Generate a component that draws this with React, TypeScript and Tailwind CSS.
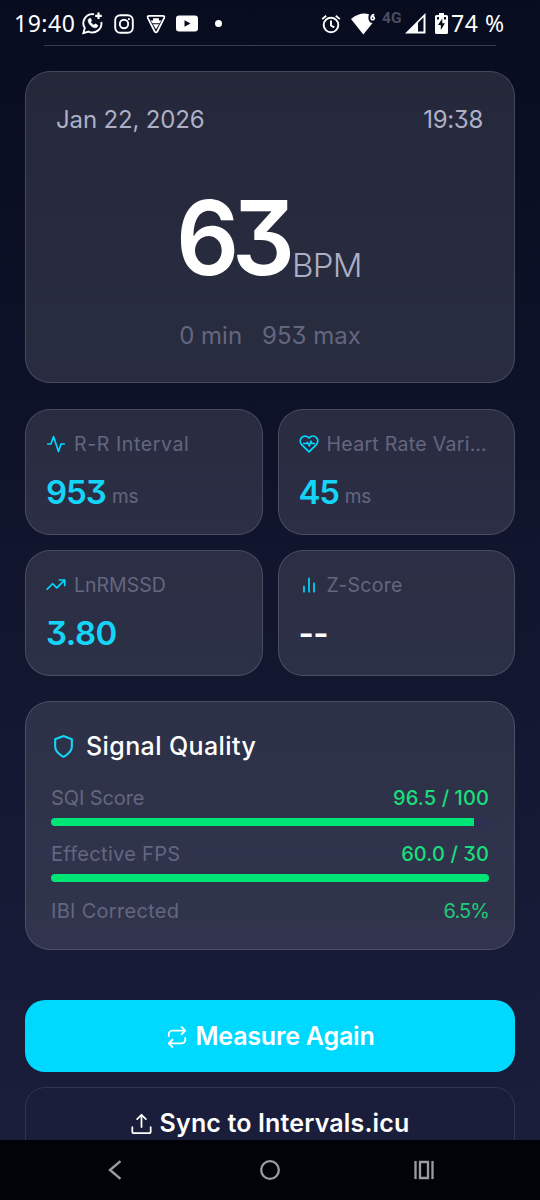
import React from "react";

const inter = "font-['Inter',sans-serif]";

function StatusBar() {
  return (
    <header className="flex h-[44px] shrink-0 items-center pl-[14px] pr-[35px] pt-[3px] font-['Noto_Sans',sans-serif] text-white">
      <span className="w-[67px] whitespace-nowrap text-[23px] leading-none tracking-[0.5px]">19:40</span>
      <svg className="h-6 w-6 shrink-0" viewBox="0 0 24 24" fill="none" stroke="currentColor" strokeWidth="1.9">
        <path d="M13 2.3A9 9 0 0 0 3.8 16L2.4 21.1 7.6 19.6A9 9 0 0 0 20.3 10" />
        <path d="M17.5 0.5v6.6M14.2 3.8h6.6" strokeWidth="2.2" />
        <path d="M8.2 6.4c-1.8 1-1.2 3.6.4 5.8s4.2 4.2 6.4 3.5c1.7-.5 2.2-2 1.5-2.7l-2.2-1.2-1.4 1.3c-1.4-.6-2.5-1.7-3.2-3.1l1-1.3-.9-2.3z" fill="currentColor" strokeWidth="0.5" />
      </svg>
      <svg className="ml-[9px] h-[20px] w-[20px] shrink-0" viewBox="0 0 20 20" fill="none" stroke="currentColor" strokeWidth="1.9">
        <rect x="1.2" y="1.2" width="17.6" height="17.6" rx="5" />
        <circle cx="10" cy="10" r="4.2" />
        <circle cx="14.9" cy="5.1" r="1.1" fill="currentColor" stroke="none" />
      </svg>
      <svg className="ml-[12px] h-[20px] w-[20px] shrink-0" viewBox="0 0 20 20" fill="none" stroke="currentColor" strokeLinejoin="round">
        <path d="M3.2 1.8h13.6q2.2.2 1.3 2.3L11.3 17.5q-1.3 1.7-2.6 0L1.9 4.1Q1 2 3.2 1.8z" strokeWidth="1.8" />
        <path d="M7 4.3h6v2.2h2.3l-1.7 2.7H6.4L4.7 6.5H7z" fill="currentColor" stroke="none" />
        <path d="M6.9 10.2h6.2L10 15.2z" fill="currentColor" stroke="none" />
      </svg>
      <svg className="ml-[10px] h-[17px] w-[22px] shrink-0" viewBox="0 0 22 17">
        <rect x="0" y="0.5" width="22" height="16" rx="3" fill="white" />
        <path d="M8.5 5.2v6.6l6-3.3z" fill="#080c1f" />
      </svg>
      <span className="ml-[17px] h-[7px] w-[7px] rounded-full bg-white" />
      <svg className="ml-auto h-[20px] w-[20px] shrink-0" viewBox="0 0 20 20" fill="none" stroke="currentColor" strokeWidth="1.9">
        <circle cx="10" cy="11" r="7.3" />
        <path d="M10 6.5v5l3.3 1.9M1.2 5.1l4-3.4M18.8 5.1l-4-3.4" />
      </svg>
      <svg className="ml-[10px] h-[22px] w-[26px] shrink-0" viewBox="0 0 26 22">
        <path d="M0 6Q9-1.5 18 1.2q-1.5 4.5.6 7.5 1.5 1.3 3 1.2L12.3 21.500z" fill="white" />
        <path d="M23.3 1.7q-3 .2-3.2 3.5a1.6 1.6 0 1 0 .5-1.2" fill="none" stroke="white" strokeWidth="1.7" />
      </svg>
      <span className="-mt-[10px] ml-[5px] w-[20px] whitespace-nowrap font-['Roboto',sans-serif] text-[15.5px] font-bold leading-none text-[#4b4e5e]">4G</span>
      <svg className="ml-[3px] h-[21px] w-[21px] shrink-0" viewBox="0 0 21 21">
        <path d="M0 20.5 20.5 0v20.500z" fill="white" />
        <path d="M13 9.8 18.5 4.3v14.2H13z" fill="#080c1f" />
      </svg>
      <svg className="ml-[9px] h-[22px] w-[13px] shrink-0" viewBox="0 0 13 22">
        <path d="M4 0h5v2h2.500Q13 2 13 3.500v16Q13 21 11.500 21h-10Q0 21 0 19.500v-16Q0 2 1.500 2H4z" fill="white" />
        <path d="M7.3 5.5 3 12h2.800v5L10 10.300H7.300zM2 4h2v2.500H2zM9 4h2v2.500H9z" fill="#080c1f" />
      </svg>
      <span className="ml-[3px] w-[54px] whitespace-nowrap text-[23px] leading-none tracking-[0.6px]">74 %</span>
    </header>
  );
}

function MetricCard(props: { icon: React.ReactNode; label: React.ReactNode; children: React.ReactNode }) {
  return (
    <div className="h-[126px] min-w-0 rounded-[25px] border border-white/15 bg-white/[0.115] pl-[20px] pr-[10px] pt-[24px]">
      <div className="flex h-5 items-center gap-2 text-[#00d9ff]">
        {props.icon}
        <span className="whitespace-nowrap text-[19.5px] leading-5 text-[#64667f]">{props.label}</span>
      </div>
      <div className="mt-[20px] flex h-9 items-baseline whitespace-nowrap text-[33px] font-semibold leading-9 text-[#14d5f8]">
        {props.children}
      </div>
    </div>
  );
}

function Unit() {
  return <span className="relative -top-px ml-[6px] text-[19px] font-normal tracking-[0px] text-[#64667f]">ms</span>;
}

function Bar({ percent }: { percent: number }) {
  return (
    <div className="h-2 overflow-hidden rounded-full bg-[#2d3050]">
      <div className="h-full bg-[#00e676]" style={{ width: `${percent}%` }} />
    </div>
  );
}

const stroke = {
  viewBox: "0 0 24 24",
  fill: "none",
  stroke: "currentColor",
  strokeWidth: 2,
  strokeLinecap: "round" as const,
  strokeLinejoin: "round" as const,
};

export default function App() {
  return (
    <div
      className={`${inter} flex h-[1200px] w-[540px] flex-col overflow-hidden bg-linear-to-b from-[#080c1f] to-[#1b1f3d] [font-feature-settings:'cv09']`}
    >
      <StatusBar />
      <div className="mx-[44px] mt-[1px] h-px shrink-0 bg-[#393c4a]" />

      <main className="flex min-h-0 flex-1 flex-col overflow-hidden px-[25px] pt-[25px]">
        <section className="flex h-[312px] shrink-0 flex-col items-center rounded-[25px] border border-white/15 bg-white/[0.115] px-[31px] pt-[36px]">
          <div className="flex w-full justify-between text-[24px] leading-6 text-[#adafc6]">
            <span className="-ml-px tracking-[-0.15px]">Jan 22, 2026</span>
            <span className="tracking-[-0.3px]">19:38</span>
          </div>
          <div className="mt-[56px] flex h-[100px] w-[184px] items-baseline leading-[100px] text-white">
            <span className="-ml-[2px] w-[116px] shrink-0 origin-left scale-x-[0.96] text-[103px] font-semibold tracking-[-7.5px]">63</span>
            <span className="relative top-[2px] text-[33px] font-light tracking-[-0.7px] text-[#adafc6]">BPM</span>
          </div>
          <div className="mt-[36px] flex gap-5 whitespace-nowrap text-[24px] leading-6 text-[#64667f]">
            <span>0 min</span>
            <span>953 max</span>
          </div>
        </section>

        <section className="mt-[26px] grid shrink-0 grid-cols-2 gap-x-[15px] gap-y-[15px]">
          <MetricCard
            icon={
              <svg className="h-5 w-5 shrink-0" {...stroke}>
                <path d="M22 12h-4l-3 9L9 3l-3 9H2" />
              </svg>
            }
            label={<span className="tracking-[0.6px]">R-R Interval</span>}
          >
            <span className="tracking-[-1px]">953</span>
            <Unit />
          </MetricCard>
          <MetricCard
            icon={
              <svg className="h-5 w-5 shrink-0" {...stroke}>
                <path d="M12 21.5 3.2 12.7A5.9 5.9 0 0 1 11.5 4.3l.5.5.5-.5a5.9 5.9 0 0 1 8.3 8.400z" />
                <path d="M5.5 11.5h3.5l1.2-1.5 2.3 4.5 1.7-6 1.3 3h3" strokeWidth="1.8" />
              </svg>
            }
            label={<span className="tracking-[0.3px]">Heart Rate Vari…</span>}
          >
            <span className="tracking-[-1.3px]">45</span>
            <Unit />
          </MetricCard>
          <MetricCard
            icon={
              <svg className="h-5 w-5 shrink-0" {...stroke}>
                <path d="M1.5 17 8 10.5l5 5L22 6.5" />
                <path d="M16 6h6.5v6.5" />
              </svg>
            }
            label={<span className="tracking-[0px]">LnRMSSD</span>}
          >
            <span className="tracking-[-0.5px]">3.80</span>
          </MetricCard>
          <MetricCard
            icon={
              <svg className="h-5 w-5 shrink-0" {...stroke}>
                <path d="M18 20V10M12 20V4M6 20v-6" />
              </svg>
            }
            label={<span className="tracking-[0.3px]">Z-Score</span>}
          >
            <span className="tracking-[-0.5px] text-white">--</span>
          </MetricCard>
        </section>

        <section className="mt-[25px] flex h-[249px] shrink-0 flex-col rounded-[25px] border border-white/15 bg-white/[0.115] px-[25px] pt-[32px] text-[20px] leading-5 text-[#64667f]">
          <div className="flex h-[25px] items-center gap-[10px]">
            <svg className="h-[25px] w-[25px] text-[#14d5f8]" {...stroke}>
              <path d="M12 22s8-4 8-10V5l-8-3-8 3v7c0 6 8 10 8 10z" />
            </svg>
            <h2 className="whitespace-nowrap text-[25px] font-medium leading-[25px] tracking-[0.4px] text-white">Signal Quality</h2>
          </div>
          <div className="mt-[29px] flex justify-between">
            <span className="tracking-[-0.1px]">SQI Score</span>
            <span className="font-medium tracking-[0.1px] text-[#18df7c]">96.5 / 100</span>
          </div>
          <div className="mt-[10px]"><Bar percent={96.5} /></div>
          <div className="mt-[18px] flex justify-between">
            <span className="tracking-[0.3px]">Effective FPS</span>
            <span className="font-medium tracking-[0.1px] text-[#18df7c]">60.0 / 30</span>
          </div>
          <div className="mt-[10px]"><Bar percent={100} /></div>
          <div className="mt-[19px] flex justify-between">
            <span className="tracking-[0.3px]">IBI Corrected</span>
            <span className="tracking-[-0.9px] text-[#20c979]">6.5%</span>
          </div>
        </section>

        <button className="mt-[50px] flex h-[72px] shrink-0 items-center justify-center gap-2 rounded-[20px] bg-[#00d9ff] pt-px text-[25px] font-semibold text-white">
          <svg className="h-[22px] w-[22px]" {...stroke}>
            <path d="m17 1 4 4-4 4M3 11V9a4 4 0 0 1 4-4h14M7 23l-4-4 4-4M21 13v2a4 4 0 0 1-4 4H3" />
          </svg>
          <span className="tracking-[-0.2px]">Measure Again</span>
        </button>
        <button className="mt-[15px] flex h-[74px] shrink-0 items-center justify-center gap-2 rounded-[20px] border border-white/10 text-[25px] font-semibold text-white">
          <svg className="-mt-[2px] h-[21px] w-[21px]" {...stroke}>
            <path d="M22.5 16v5a2 2 0 0 1-2 2h-17a2 2 0 0 1-2-2v-5M17 7l-5-5-5 5M12 2.5V16" />
          </svg>
          <span className="tracking-[0.15px]">Sync to Intervals.icu</span>
        </button>
      </main>

      <nav className="grid h-[60px] shrink-0 grid-cols-[230px_80px_230px] items-center justify-items-center bg-[#020308] text-[#9b9ca0]">
        <svg className="h-5 w-5" viewBox="0 0 20 20" fill="none" stroke="currentColor" strokeWidth="2.4">
          <path d="M15.5 1.2 5 10l10.5 8.8" />
        </svg>
        <svg className="h-5 w-5" viewBox="0 0 20 20" fill="none" stroke="currentColor" strokeWidth="2.3">
          <circle cx="10" cy="10" r="8.8" />
        </svg>
        <svg className="-ml-[2px] h-5 w-5" viewBox="0 0 20 20" fill="none" stroke="currentColor" strokeWidth="2.3">
          <path d="M1.5 1v18M18.5 1v18M6 2h8v16H6z" />
        </svg>
      </nav>
    </div>
  );
}
